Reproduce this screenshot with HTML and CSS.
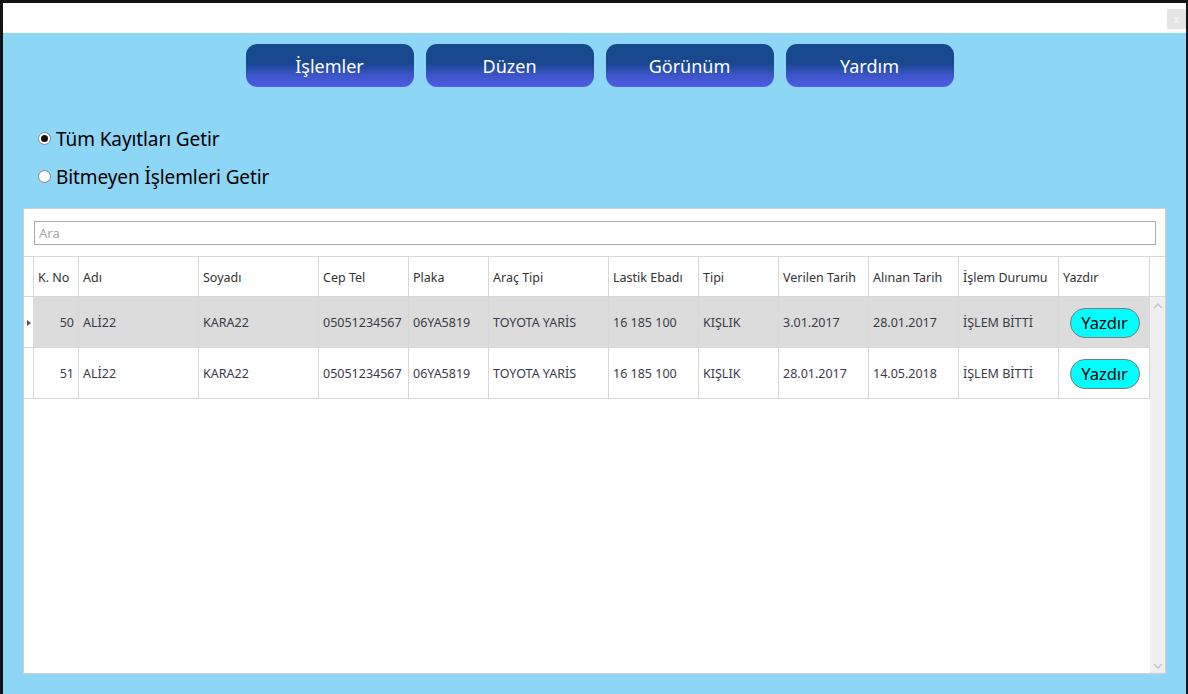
FILE: index.html
```html
<!DOCTYPE html>
<html lang="tr">
<head>
<meta charset="utf-8">
<title>Kayıtlar</title>
<link rel="stylesheet" href="styles.css">
</head>
<body>
<div class="window">
  <div class="titlebar"><span class="close">x</span></div>
  <div class="content">
    <nav class="menu">
      <button class="menu-btn">İşlemler</button>
      <button class="menu-btn">Düzen</button>
      <button class="menu-btn">Görünüm</button>
      <button class="menu-btn">Yardım</button>
    </nav>
    <div class="filters">
      <label class="radio"><span class="dot checked"></span>Tüm Kayıtları Getir</label>
      <label class="radio"><span class="dot"></span>Bitmeyen İşlemleri Getir</label>
    </div>
    <section class="panel">
      <div class="search"><input class="search-input" placeholder="Ara"></div>
      <div class="grid">
        <div class="row head">
          <div class="c rh"></div>
          <div class="c w45">K. No</div>
          <div class="c w120">Adı</div>
          <div class="c w120">Soyadı</div>
          <div class="c w90">Cep Tel</div>
          <div class="c w80">Plaka</div>
          <div class="c w120">Araç Tipi</div>
          <div class="c w90">Lastik Ebadı</div>
          <div class="c w80">Tipi</div>
          <div class="c w90">Verilen Tarih</div>
          <div class="c w90">Alınan Tarih</div>
          <div class="c w100">İşlem Durumu</div>
          <div class="c w91">Yazdır</div>
          <div class="c filler"></div>
        </div>
        <div class="body">
          <div class="rows">
            <div class="row data selected">
              <div class="c rh"><span class="arrow"></span></div>
              <div class="c w45 num">50</div>
              <div class="c w120">ALİ22</div>
              <div class="c w120">KARA22</div>
              <div class="c w90">05051234567</div>
              <div class="c w80">06YA5819</div>
              <div class="c w120">TOYOTA YARİS</div>
              <div class="c w90">16 185 100</div>
              <div class="c w80">KIŞLIK</div>
              <div class="c w90">3.01.2017</div>
              <div class="c w90">28.01.2017</div>
              <div class="c w100">İŞLEM BİTTİ</div>
              <div class="c w91 btncell"><button class="print">Yazdır</button></div>
            </div>
            <div class="row data">
              <div class="c rh"></div>
              <div class="c w45 num">51</div>
              <div class="c w120">ALİ22</div>
              <div class="c w120">KARA22</div>
              <div class="c w90">05051234567</div>
              <div class="c w80">06YA5819</div>
              <div class="c w120">TOYOTA YARİS</div>
              <div class="c w90">16 185 100</div>
              <div class="c w80">KIŞLIK</div>
              <div class="c w90">28.01.2017</div>
              <div class="c w90">14.05.2018</div>
              <div class="c w100">İŞLEM BİTTİ</div>
              <div class="c w91 btncell"><button class="print">Yazdır</button></div>
            </div>
          </div>
          <div class="scrollbar">
            <svg class="chev" width="10" height="6" viewBox="0 0 10 6"><path d="M1 5 L5 1 L9 5" fill="none" stroke="#c4c4c4" stroke-width="1.4"/></svg>
            <svg class="chev" width="10" height="6" viewBox="0 0 10 6"><path d="M1 1 L5 5 L9 1" fill="none" stroke="#c4c4c4" stroke-width="1.4"/></svg>
          </div>
        </div>
      </div>
    </section>
  </div>
</div>
</body>
</html>
```

FILE: styles.css
```css
* { box-sizing: border-box; }
html, body { margin: 0; height: 100%; }
body {
  background: #141414;
  font-family: "Noto Sans", "Open Sans", "DejaVu Sans", sans-serif;
  padding: 3px 2px 0 3px;
}
.window {
  height: 691px;
  display: flex;
  flex-direction: column;
  background: #8dd6f6;
}
.titlebar {
  height: 30px;
  background: #ffffff;
  display: flex;
  justify-content: flex-end;
  padding-top: 6px;
}
.close {
  width: 19px;
  height: 20px;
  background: #e5e5e5;
  color: #f6f6f6;
  font-family: "Liberation Serif", serif;
  font-size: 12px;
  font-weight: bold;
  display: flex;
  align-items: center;
  justify-content: center;
}
.content {
  flex: 1;
  display: flex;
  flex-direction: column;
  padding: 11px 20px 20px 20px;
}
.menu {
  display: flex;
  justify-content: center;
  gap: 12px;
  padding-left: 10px;
}
.menu-btn {
  width: 168px;
  height: 43px;
  border: none;
  border-radius: 11px;
  background: linear-gradient(to bottom, #174a8e 0%, #18478f 45%, #3c55c8 72%, #4f5ce6 100%);
  color: #ffffff;
  font-family: "Noto Sans", "Open Sans", sans-serif;
  font-size: 18px;
  padding: 1px 0 0;
}
.filters {
  display: flex;
  flex-direction: column;
  gap: 14px;
  padding: 40px 0 0 15px;
  height: 121px;
}
.radio {
  display: flex;
  align-items: center;
  font-size: 19px;
  color: #000;
  height: 24px;
  letter-spacing: -0.1px;
}
.dot {
  width: 13px;
  height: 13px;
  border-radius: 50%;
  background: #fff;
  border: 1px solid #8a8a8a;
  margin: -2px 5px 0 0;
  display: flex;
  align-items: center;
  justify-content: center;
}
.dot.checked::after {
  content: "";
  width: 7px;
  height: 7px;
  border-radius: 50%;
  background: #111;
}
.panel {
  flex: 1;
  background: #fff;
  border: 1px solid #d0d0d0;
  display: flex;
  flex-direction: column;
}
.search { padding: 12px 9px 11px 10px; }
.search-input {
  display: block;
  width: 100%;
  height: 24px;
  border: 1px solid #ababab;
  padding: 0 4px;
  font-family: "Noto Sans", sans-serif;
  font-size: 13px;
  outline: none;
}
.search-input::placeholder { color: #a8a8a8; }
.grid {
  flex: 1;
  display: flex;
  flex-direction: column;
  border-top: 1px solid #d8d8d8;
}
.row { display: flex; }
.c {
  flex: none;
  border-right: 1px solid #d8d8d8;
  padding: 0 4px;
  font-size: 12.5px;
  color: #3a3a48;
  display: flex;
  align-items: center;
  white-space: nowrap;
  overflow: hidden;
}
.rh { width: 10px; padding: 0; }
.w45 { width: 45px; }
.w80 { width: 80px; }
.w90 { width: 90px; }
.w91 { width: 91px; }
.w100 { width: 100px; }
.w120 { width: 120px; }
.head { height: 40px; border-bottom: 1px solid #d8d8d8; }
.head .c { color: #333; padding-top: 1px; }
.filler { flex: 1; border-right: none; }
.body { flex: 1; display: flex; }
.rows { width: 1126px; display: flex; flex-direction: column; }
.data { height: 51px; border-bottom: 1px solid #d8d8d8; }
.data .c { padding-top: 1px; }
.selected .c:not(.rh) { background: #dcdcdc; }
.num { justify-content: flex-end; }
.arrow {
  width: 0; height: 0;
  border-top: 3.5px solid transparent;
  border-bottom: 3.5px solid transparent;
  border-left: 4px solid #555;
  margin-left: 3px;
}
.btncell { justify-content: center; padding: 0 0 0 1px; }
.print {
  width: 70px;
  height: 30px;
  border-radius: 15px;
  background: #00ffff;
  border: 1px solid #7a7a7a;
  font-family: "Noto Sans", sans-serif;
  font-size: 16.5px;
  color: #000;
  padding: 0;
}
.scrollbar {
  flex: 1;
  background: #efefef;
  display: flex;
  flex-direction: column;
  justify-content: space-between;
  align-items: center;
  padding: 6px 0 4px;
}
```
